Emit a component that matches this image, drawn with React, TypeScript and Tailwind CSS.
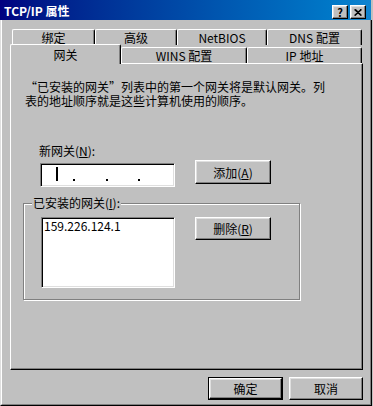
import React from 'react'

const raised =
  'bg-[#c0c0c0] border-t border-l border-t-white border-l-white border-r border-b border-r-black border-b-black shadow-[inset_-1px_-1px_0_#808080,inset_1px_1px_0_#dfdfdf]'

const sunken =
  'bg-white border-t border-l border-t-[#808080] border-l-[#808080] border-r border-b border-r-white border-b-white shadow-[inset_1px_1px_0_#000,inset_-1px_-1px_0_#dfdfdf]'

function Button({ children, className = '' }: { children: React.ReactNode; className?: string }) {
  return (
    <div className={`${raised} flex items-center justify-center leading-[13px] ${className}`}>
      {children}
    </div>
  )
}

function BackTab({ label, w }: { label: string; w: string }) {
  return (
    <div
      className={`${w} h-[16px] flex items-center justify-center leading-[13px] border-t border-l border-t-white border-l-white border-r border-r-black rounded-tl-[2px] rounded-tr-[2px] shadow-[inset_-1px_0_0_#808080]`}
    >
      {label}
    </div>
  )
}

export default function App() {
  return (
    <div className="w-[373px] h-[406px] bg-[#c0c0c0] flex flex-col text-[12px] text-black font-['Noto_Sans_CJK_SC','Noto_Sans',sans-serif] overflow-hidden">
      {/* title bar */}
      <div className="h-[20px] w-[371px] shrink-0 flex items-start bg-gradient-to-r from-[#000080] to-[#1084d0] pl-[4px] pr-[5px]">
        <span className="pt-[4px] leading-[13px] text-white font-bold">TCP/IP 属性</span>
        <div className="ml-auto mt-[5px] flex gap-[2px]">
          <div className={`${raised} w-[16px] h-[14px] flex items-center justify-center text-[11px] font-bold leading-none`}>
            ?
          </div>
          <div className={`${raised} w-[16px] h-[14px] flex items-center justify-center`}>
            <svg width="8" height="7" viewBox="0 0 8 7">
              <path d="M0.5 0.5 L7 6.5 M1.5 0.5 L7.5 6.5 M7 0.5 L0.5 6.5 M7.5 0.5 L1 6.5" stroke="#000" strokeWidth="1.1" />
            </svg>
          </div>
        </div>
      </div>

      {/* dialog body */}
      <div className="flex-1 flex flex-col border-l border-l-[#dfdfdf] border-r border-r-black border-b border-b-black w-[372px]">
        <div className="flex-1 flex flex-col border-l border-l-white border-r border-r-[#808080] border-b border-b-[#808080] pl-[8px] pt-[9px]">
          {/* tabs, back row */}
          <div className="flex pl-[2px]">
            <BackTab label="绑定" w="w-[83px]" />
            <BackTab label="高级" w="w-[82px]" />
            <BackTab label="NetBIOS" w="w-[90px]" />
            <BackTab label="DNS 配置" w="w-[95px]" />
          </div>
          {/* tabs, front row */}
          <div className="flex h-[18px] items-start">
            <div className="relative z-10 -mt-[1px] w-[111px] h-[20px] bg-[#c0c0c0] flex justify-center pt-[3px] leading-[13px] border-t border-l border-t-white border-l-white border-r border-r-black rounded-tl-[2px] rounded-tr-[2px] shadow-[inset_-1px_0_0_#808080]">
              网关
            </div>
            <div className="mt-[2px]">
              <BackTab label="WINS 配置" w="w-[126px]" />
            </div>
            <div className="mt-[2px]">
              <BackTab label="IP 地址" w="w-[115px]" />
            </div>
          </div>

          {/* tab page */}
          <div className="w-[353px] h-[307px] flex flex-col border-t border-l border-t-white border-l-white border-r border-b border-r-black border-b-black shadow-[inset_-1px_-1px_0_#808080]">
            <p className="mt-[16px] pl-[14px] leading-[14px] whitespace-nowrap">
              “已安装的网关”列表中的第一个网关将是默认网关。列
              <br />
              表的地址顺序就是这些计算机使用的顺序。
            </p>

            <div className="mt-[36px] pl-[28px] leading-[13px]">
              新网关(<span className="underline">N</span>):
            </div>

            <div className="flex items-start">
              <div className={`${sunken} ml-[29px] mt-[6px] w-[135px] h-[24px] flex items-start`}>
                <span className="ml-[15px] mt-[3px] w-[2px] h-[14px] bg-black" />
                <span className="ml-[15px] mt-[15px] w-[2px] h-[2px] bg-black" />
                <span className="ml-[31px] mt-[15px] w-[2px] h-[2px] bg-black" />
                <span className="ml-[30px] mt-[15px] w-[2px] h-[2px] bg-black" />
              </div>
              <Button className="ml-[20px] mt-[3px] w-[76px] h-[24px]">
                添加(<span className="underline">A</span>)
              </Button>
            </div>

            {/* installed gateways group */}
            <div className="relative ml-[12px] mt-[16px] w-[277px] h-[97px] border border-[#808080] shadow-[inset_1px_1px_0_#fff,1px_1px_0_#fff] flex items-start">
              <span className="absolute left-[8px] -top-[8px] px-[1px] bg-[#c0c0c0] leading-[13px]">
                已安装的网关(<span className="underline">I</span>):
              </span>
              <div className={`${sunken} ml-[17px] mt-[13px] w-[134px] h-[71px] pl-[2px] pt-[1px] leading-[13px]`}>
                159.226.124.1
              </div>
              <Button className="ml-[20px] mt-[13px] w-[76px] h-[23px]">
                删除(<span className="underline">R</span>)
              </Button>
            </div>
          </div>

          {/* dialog buttons */}
          <div className="flex mt-[7px] ml-[198px] gap-[6px]">
            <div className="w-[75px] h-[23px] border border-black">
              <Button className="w-full h-full">确定</Button>
            </div>
            <Button className="w-[74px] h-[23px]">取消</Button>
          </div>
        </div>
      </div>
    </div>
  )
}
